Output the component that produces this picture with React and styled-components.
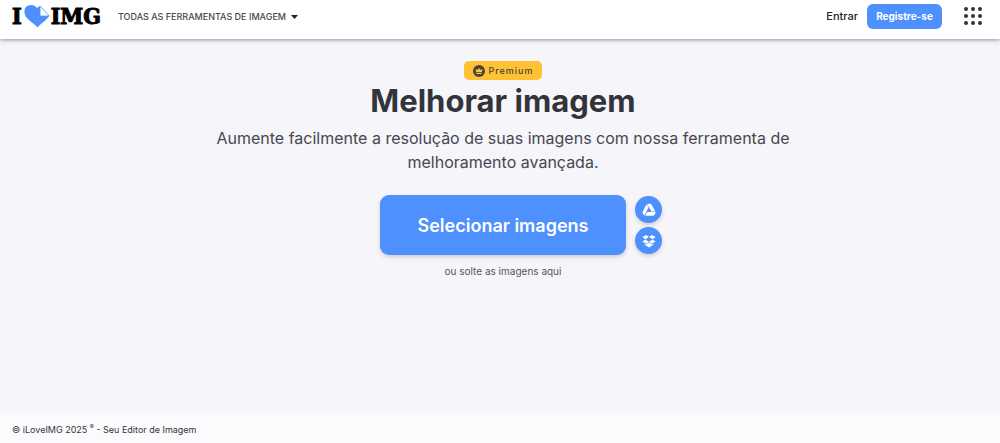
import React from 'react';
import styled, { createGlobalStyle } from 'styled-components';

const GlobalStyle = createGlobalStyle`
    * {
        box-sizing: border-box;
    }
    body {
        margin: 0;
        background: #f5f5fa;
        color: #33333b;
        font-family: Inter, "Liberation Sans", sans-serif;
    }
`;

const PageStyle = styled.div`
    display: flex;
    flex-direction: column;
    min-height: 100vh;
`;

const HeaderStyle = styled.header`
    display: flex;
    align-items: center;
    height: 39px;
    padding: 0 18px 7px 12px;
    background: #fff;
    box-shadow: 0 1px 4px rgba(0, 0, 0, 0.4);
`;

const LogoStyle = styled.a`
    display: flex;
    align-items: center;
    color: #000;
    font-family: "DejaVu Serif Condensed", "DejaVu Serif", serif;
    font-size: 23px;
    font-weight: 700;
    line-height: 24px;
    text-decoration: none;
    -webkit-text-stroke: 1px #000;
`;

const HeartStyle = styled.svg`
    width: 26px;
    height: 24px;
    margin: 0 1px 0 2px;
`;

const MenuButton = styled.button`
    display: flex;
    align-items: center;
    gap: 5px;
    margin: 1px auto 0 17px;
    padding: 0;
    border: 0;
    background: none;
    color: #47474f;
    font: 500 9px Inter, sans-serif;
`;

const CaretStyle = styled.svg`
    width: 7px;
    height: 4px;
    fill: #222;
`;

const LoginLink = styled.a`
    color: #222228;
    font-size: 11px;
    font-weight: 500;
    text-decoration: none;
`;

const RegisterButton = styled.button`
    width: 75px;
    height: 25px;
    margin: 0 22px 0 9px;
    padding: 0;
    border: 0;
    border-radius: 6px;
    background: #4d90fe;
    color: #fff;
    font: 700 10px Inter, sans-serif;
`;

const AppsButton = styled.button`
    display: flex;
    padding: 0;
    border: 0;
    background: none;
    svg {
        width: 18px;
        height: 18px;
        fill: #33333b;
    }
`;

const MainStyle = styled.main`
    flex: 1;
    display: flex;
    flex-direction: column;
    align-items: center;
    padding: 22px 0 22px 6px;
    text-align: center;
`;

const PremiumStyle = styled.span`
    display: flex;
    align-items: center;
    gap: 3px;
    height: 19px;
    padding: 0 8px 0 9px;
    border-radius: 5px;
    background: #ffc233;
    color: #47423b;
    font-size: 9px;
    font-weight: 500;
    letter-spacing: 1px;
    svg {
        width: 12px;
        height: 12px;
    }
`;

const H1Style = styled.h1`
    margin: 0;
    font-size: 31px;
    font-weight: 700;
    line-height: 42px;
`;

const SubtitleStyle = styled.p`
    max-width: 600px;
    margin: 4px 0 21px;
    color: #47474f;
    font-size: 16px;
    line-height: 24px;
`;

const UploadStyle = styled.div`
    display: grid;
    grid-template-columns: 1fr auto 1fr;
    align-items: center;
    column-gap: 9px;
    width: 100%;
`;

const SelectButton = styled.button`
    grid-column: 2;
    width: 246px;
    height: 60px;
    border: 0;
    border-radius: 9px;
    background: #4d90fe;
    box-shadow: 0 2px 4px rgba(0, 0, 0, 0.16);
    color: #fff;
    font: 600 18px Inter, sans-serif;
`;

const SourcesStyle = styled.div`
    display: flex;
    flex-direction: column;
    gap: 4px;
`;

const SourceButton = styled.button`
    display: flex;
    align-items: center;
    justify-content: center;
    width: 27px;
    height: 27px;
    padding: 0;
    border: 0;
    border-radius: 50%;
    background: #4d90fe;
    box-shadow: 0 2px 4px rgba(0, 0, 0, 0.16);
    color: #fff;
    svg {
        width: 14px;
        height: 14px;
        fill: currentColor;
    }
`;

const DropHint = styled.p`
    margin: 8px 0 0;
    color: #55555f;
    font-size: 10px;
    line-height: 16px;
`;

const FooterStyle = styled.footer`
    padding: 10px 12px 6px;
    background: #fbfbfd;
    font-size: 9px;
    line-height: 14px;
    sup {
        font-size: 6px;
        line-height: 0;
    }
`;

const dots = [2, 9, 16];

function DriveIcon() {
    return (
        <svg viewBox="0 0 14 14">
            <path d="M4.6 1.3L6.5 4.6L2.5 12.4Q1.9 12.2 1.6 11.6L0.8 10.2Q0.3 9.3 0.8 8.4Z" />
            <path d="M5.1 1Q5.4 0.8 6 0.8H8Q9.1 0.8 9.6 1.7L13.3 8.4H9.5Z" />
            <path d="M5.3 9H13.5Q13.7 9.7 13.3 10.4L12.5 11.8Q12 12.7 10.9 12.7H3.3Z" />
        </svg>
    );
}

function DropboxIcon() {
    return (
        <svg viewBox="0 0 14 14">
            <path d="M4.2 1L7 3L3.3 5.2L0.4 3.1ZM9.8 1L13.6 3.1L10.7 5.2L7 3ZM3.3 5.4L7 7.7L4.2 9.8L0.4 7.6ZM10.7 5.4L13.6 7.6L9.8 9.8L7 7.7ZM7 8.6L9.8 10.6L11.3 9.8V10.7L7 13.4L2.7 10.7V9.8L4.2 10.6Z" />
        </svg>
    );
}

function Header() {
    return (
        <HeaderStyle>
            <LogoStyle href="#" aria-label="I love IMG">
                <span>I</span>
                <HeartStyle viewBox="0 0 26 24">
                    <path fill="#4d90fe" d="M13.5 23.5C10 19 4.5 17 1.5 12C-1.5 6 2 1 7 1C10 1 11.5 2 13 4L16 2V12H25C22 17 17 19 13.5 23.5Z" />
                    <path fill="#fff" stroke="#4d90fe" strokeWidth="0.8" strokeLinejoin="round" d="M16 2L25.3 12H16Z" />
                </HeartStyle>
                <span>IMG</span>
            </LogoStyle>
            <MenuButton type="button">
                TODAS AS FERRAMENTAS DE IMAGEM
                <CaretStyle viewBox="0 0 7 4"><path d="M0 0H7L3.5 4Z" /></CaretStyle>
            </MenuButton>
            <LoginLink href="#">Entrar</LoginLink>
            <RegisterButton type="button">Registre-se</RegisterButton>
            <AppsButton type="button" aria-label="Menu">
                <svg viewBox="0 0 18 18">
                    {dots.map(y => dots.map(x => <circle key={`${x}-${y}`} cx={x} cy={y} r="2" />))}
                </svg>
            </AppsButton>
        </HeaderStyle>
    );
}

function Hero() {
    return (
        <MainStyle>
            <PremiumStyle>
                <svg viewBox="0 0 12 12">
                    <circle cx="6" cy="6" r="6" fill="#47423b" />
                    <path fill="#ffc233" d="M2.5 4L4.5 5L6 3L7.5 5L9.5 4L8.9 7.3H3.1ZM3.3 8H8.7V9H3.3Z" />
                </svg>
                Premium
            </PremiumStyle>
            <H1Style>Melhorar imagem</H1Style>
            <SubtitleStyle>
                Aumente facilmente a resolução de suas imagens com nossa ferramenta de melhoramento avançada.
            </SubtitleStyle>
            <UploadStyle>
                <SelectButton type="button">Selecionar imagens</SelectButton>
                <SourcesStyle>
                    <SourceButton type="button" aria-label="Google Drive"><DriveIcon /></SourceButton>
                    <SourceButton type="button" aria-label="Dropbox"><DropboxIcon /></SourceButton>
                </SourcesStyle>
            </UploadStyle>
            <DropHint>ou solte as imagens aqui</DropHint>
        </MainStyle>
    );
}

function App() {
    return (
        <PageStyle>
            <GlobalStyle />
            <Header />
            <Hero />
            <FooterStyle>© iLoveIMG 2025 <sup>®</sup> - Seu Editor de Imagem</FooterStyle>
        </PageStyle>
    );
}

export default App;
